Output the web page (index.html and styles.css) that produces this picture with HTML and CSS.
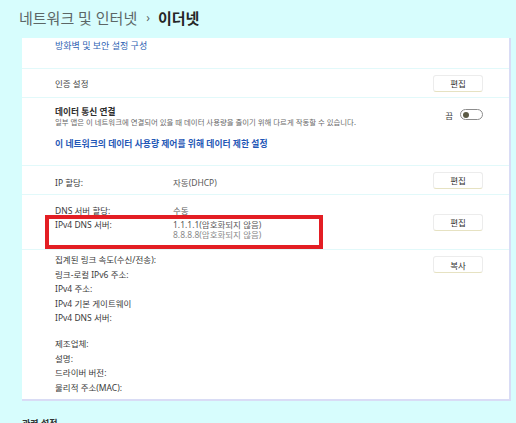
FILE: index.html
```html
<!DOCTYPE html>
<html lang="ko">
<head>
    <meta charset="UTF-8">
    <meta name="viewport" content="width=device-width, initial-scale=1.0">
    <title>이더넷</title>
    <link rel="stylesheet" href="styles.css">
</head>
<body>
    <header class="page-title">
        <span class="crumb">네트워크 및 인터넷</span>
        <span class="crumb-sep">›</span>
        <span class="current">이더넷</span>
    </header>

    <main class="panel">
        <section class="card card-top">
            <a class="link">방화벽 및 보안 설정 구성</a>
        </section>

        <section class="card row-card">
            <span class="label">인증 설정</span>
            <button class="btn">편집</button>
        </section>

        <!-- Metered connection -->
        <section class="card metered">
            <div class="metered-head">
                <div>
                    <div class="heading">데이터 통신 연결</div>
                    <div class="subtext">일부 앱은 이 네트워크에 연결되어 있을 때 데이터 사용량을 줄이기 위해 다르게 작동할 수 있습니다.</div>
                </div>
                <div class="switch-wrap">
                    <span class="switch-label">끔</span>
                    <span class="switch"><span class="knob"></span></span>
                </div>
            </div>
            <a class="link link-strong">이 네트워크의 데이터 사용량 제어를 위해 데이터 제한 설정</a>
        </section>

        <section class="card row-card">
            <div class="prop-row">
                <span class="prop-key">IP 할당:</span>
                <span class="prop-val">자동(DHCP)</span>
            </div>
            <button class="btn">편집</button>
        </section>

        <section class="card dns">
            <div class="prop-grid">
                <span class="prop-key">DNS 서버 할당:</span>
                <span class="prop-val">수동</span>
                <span class="prop-key">IPv4 DNS 서버:</span>
                <span class="prop-val dns-list">
                    <span>1.1.1.1(암호화되지 않음)</span>
                    <span class="muted">8.8.8.8(암호화되지 않음)</span>
                </span>
            </div>
            <button class="btn">편집</button>
            <div class="highlight"></div>
        </section>

        <section class="card props">
            <div class="prop-list">
                <div class="prop-group">
                    <span>집계된 링크 속도(수신/전송):</span>
                    <span>링크-로컬 IPv6 주소:</span>
                    <span>IPv4 주소:</span>
                    <span>IPv4 기본 게이트웨이</span>
                    <span>IPv4 DNS 서버:</span>
                </div>
                <div class="prop-group">
                    <span>제조업체:</span>
                    <span>설명:</span>
                    <span>드라이버 버전:</span>
                    <span>물리적 주소(MAC):</span>
                </div>
            </div>
            <button class="btn btn-top">복사</button>
        </section>
    </main>

    <div class="related">관련 설정</div>
</body>
</html>
```

FILE: styles.css
```css
* {
    margin: 0;
    padding: 0;
    box-sizing: border-box;
    font-family: "Noto Sans", "Noto Sans CJK KR", sans-serif;
}

body {
    background-color: #d7fdfd;
    color: #3a3a3a;
}

.page-title {
    display: flex;
    align-items: center;
    height: 20px;
    margin: 8px 0 10px 19px;
    font-size: 15px;
    line-height: 20px;
}

.crumb {
    color: #5c6666;
}

.crumb-sep {
    color: #5c6666;
    font-size: 12px;
    margin: 0 8px 0 9px;
}

.current {
    color: #262626;
    font-weight: 600;
}

.panel {
    width: 489px;
    margin-left: 22px;
    background: white;
    border-right: 2px solid #d9dcf5;
    border-bottom: 2px solid #d9dcf5;
}

.card {
    border-bottom: 1px solid #e2f9fa;
    padding: 0 26px 0 33px;
    position: relative;
}

.card:last-child {
    border-bottom: none;
}

.link {
    color: #2d5fb2;
    font-size: 9px;
    line-height: 12px;
    display: block;
}

.link-strong {
    color: #1f57b6;
    font-size: 8.8px;
    font-weight: 700;
    margin-top: 12px;
}

.card-top {
    height: 31px;
    padding-top: 2px;
}

.row-card {
    display: flex;
    align-items: center;
    justify-content: space-between;
    height: 29px;
}

.label {
    font-size: 8.5px;
    color: #444;
}

.btn {
    width: 50px;
    height: 17px;
    background: white;
    border: 1px solid #ececec;
    border-bottom-color: #e6e2c2;
    border-radius: 3px;
    font-size: 8.5px;
    color: #333;
    cursor: pointer;
}

/* metered connection block */
.metered {
    height: 68px;
    padding-top: 9px;
}

.metered-head {
    display: flex;
    justify-content: space-between;
}

.heading {
    font-size: 8.7px;
    line-height: 11px;
    font-weight: 600;
    color: #2e2e2e;
}

.subtext {
    font-size: 7.4px;
    line-height: 8px;
    color: #6a6a6a;
}

.switch-wrap {
    display: flex;
    align-items: center;
    gap: 7px;
    margin-top: 2px;
    height: 11px;
}

.switch-label {
    font-size: 8.5px;
    color: #444;
}

.switch {
    width: 23px;
    height: 11px;
    border: 1px solid #8c8c8c;
    border-radius: 6px;
    display: flex;
    align-items: center;
    padding-left: 2px;
}

.knob {
    width: 6px;
    height: 6px;
    border-radius: 50%;
    background: #5b5a45;
}

/* property rows */
.prop-row {
    display: flex;
    font-size: 8.5px;
    padding-top: 3px;
}

.prop-key {
    width: 118px;
    color: #3a3a3a;
}

.prop-val {
    color: #5a5a5a;
}

.dns {
    display: flex;
    align-items: center;
    justify-content: space-between;
    height: 55px;
}

.prop-grid {
    display: grid;
    grid-template-columns: 118px auto;
    font-size: 8.5px;
    line-height: 14px;
}

.dns-list {
    display: flex;
    flex-direction: column;
    line-height: 10.5px;
    padding-top: 2px;
}

.muted {
    color: #8a8a8a;
}

.highlight {
    position: absolute;
    left: 23px;
    top: 20px;
    width: 278px;
    height: 34px;
    border: 4px solid #e31e24;
}

.props {
    display: flex;
    justify-content: space-between;
    align-items: flex-start;
    padding-top: 3px;
    padding-bottom: 4px;
}

.prop-list {
    display: flex;
    flex-direction: column;
    gap: 11.5px;
    font-size: 8.5px;
    line-height: 14.5px;
}

.prop-group {
    display: flex;
    flex-direction: column;
}

.btn-top {
    margin-top: 3px;
}

.related {
    margin: 16px 0 0 22px;
    font-size: 9px;
    font-weight: 600;
    color: #333;
}
```
